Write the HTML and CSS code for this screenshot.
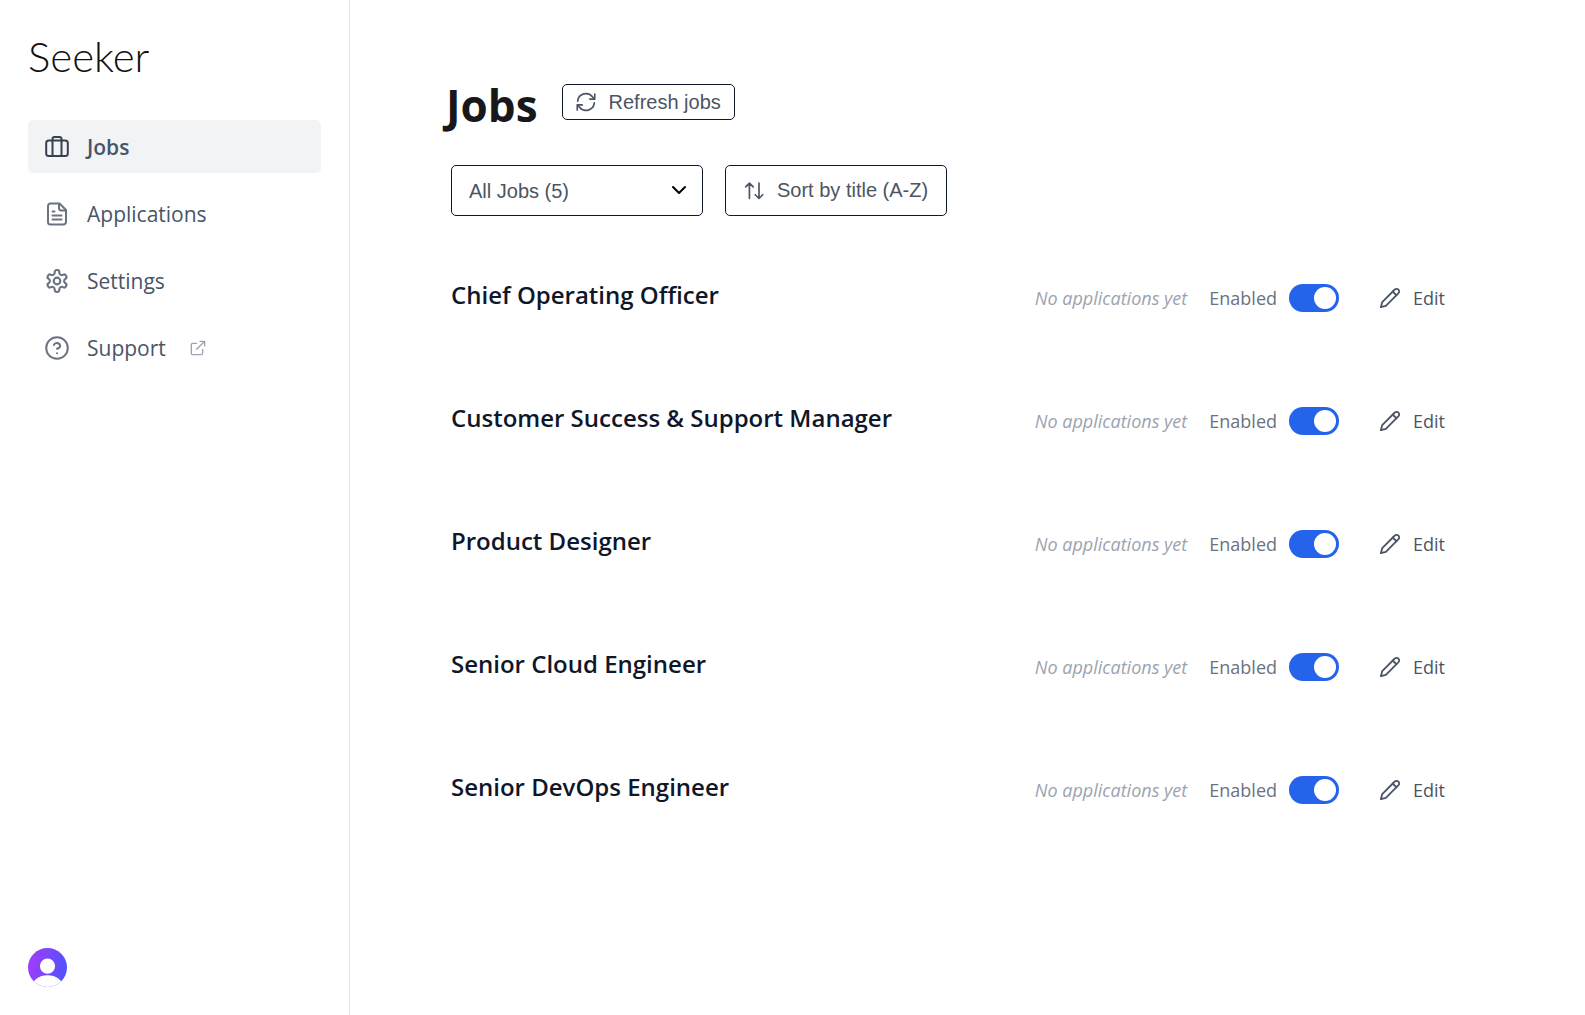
FILE: index.html
```html
<!DOCTYPE html>
<html lang="en">
<head>
  <meta charset="UTF-8" />
  <meta name="viewport" content="width=device-width, initial-scale=1.0"/>
  <title>Seeker - Jobs</title>
  <link rel="stylesheet" href="styles.css">
</head>
<body>

  <!-- shared icons -->
  <svg class="sprite" aria-hidden="true">
    <symbol id="icon-pencil" viewBox="0 0 24 24">
      <path d="M17 3a2.850 2.830 0 1 1 4 4L7.500 20.500 2 22l1.500-5.500Z"/>
      <path d="m15 5 4 4"/>
    </symbol>
  </svg>

  <aside class="sidebar">
    <a class="logo" href="#">Seeker</a>

    <nav class="nav">
      <a class="nav-item active" href="#">
        <svg class="icon" viewBox="0 0 24 24">
          <rect x="1.200" y="5.500" width="21.600" height="15.500" rx="2.500"/>
          <path d="M7.500 21V4a2 2 0 0 1 2-2h5a2 2 0 0 1 2 2v17"/>
        </svg>
        Jobs
      </a>
      <a class="nav-item" href="#">
        <svg class="icon" viewBox="0 0 24 24">
          <path d="M14.500 1.500H5.500a2.500 2.500 0 0 0-2.500 2.500v16a2.500 2.500 0 0 0 2.500 2.500h13a2.500 2.500 0 0 0 2.500-2.500V8z"/>
          <path d="M14 2v4a2.500 2.500 0 0 0 2.500 2.500H21M9.500 9.500H7.500M16.500 13.500h-9M16.500 17.500h-9"/>
        </svg>
        Applications
      </a>
      <a class="nav-item" href="#">
        <svg class="icon" viewBox="0.500 0.500 23 23">
          <path d="M12.220 1.500h-.440a2 2 0 0 0-2 2v.680a2 2 0 0 1-1 1.730l-.430.250a2 2 0 0 1-2 0l-.150-.080a2 2 0 0 0-2.730.730l-.220.380a2 2 0 0 0 .730 2.730l.150.100a2 2 0 0 1 1 1.720v.510a2 2 0 0 1-1 1.740l-.150.090a2 2 0 0 0-.730 2.730l.220.380a2 2 0 0 0 2.730.730l.150-.080a2 2 0 0 1 2 0l.430.250a2 2 0 0 1 1 1.730v.680a2 2 0 0 0 2 2h.440a2 2 0 0 0 2-2v-.680a2 2 0 0 1 1-1.730l.430-.250a2 2 0 0 1 2 0l.150.080a2 2 0 0 0 2.730-.730l.220-.390a2 2 0 0 0-.730-2.730l-.150-.080a2 2 0 0 1-1-1.740v-.500a2 2 0 0 1 1-1.740l.150-.090a2 2 0 0 0 .730-2.730l-.220-.380a2 2 0 0 0-2.730-.730l-.150.080a2 2 0 0 1-2 0l-.430-.250a2 2 0 0 1-1-1.730V3.500a2 2 0 0 0-2-2z"/>
          <circle cx="12" cy="12" r="3.200"/>
        </svg>
        Settings
      </a>
      <a class="nav-item" href="#">
        <svg class="icon" viewBox="0 0 24 24">
          <circle cx="12" cy="12" r="10.800"/>
          <path d="M8.900 9a3.200 3.200 0 0 1 6.200 1c0 2-3.100 2.800-3.100 2.800M12 17.300h.010"/>
        </svg>
        Support
        <svg class="icon-external" viewBox="0 0 24 24">
          <path d="M10 5H4a2 2 0 0 0-2 2v13a2 2 0 0 0 2 2h13a2 2 0 0 0 2-2v-6M15 2h7v7M10 14 22 2"/>
        </svg>
      </a>
    </nav>

    <button class="avatar" aria-label="Account">
      <svg viewBox="0 0 40 40">
        <defs>
          <linearGradient id="avatarFill" x1="0" y1="0.400" x2="1" y2="0.600">
            <stop offset="0" stop-color="#a03df8"/>
            <stop offset="1" stop-color="#4f52ff"/>
          </linearGradient>
          <clipPath id="avatarClip"><circle cx="20" cy="20" r="20"/></clipPath>
        </defs>
        <g clip-path="url(#avatarClip)">
          <rect width="40" height="40" fill="url(#avatarFill)"/>
          <circle cx="20" cy="18.500" r="7.800" fill="#fff"/>
          <ellipse cx="20" cy="40" rx="16" ry="12" fill="#fff"/>
        </g>
      </svg>
    </button>
  </aside>

  <main class="content">
    <header class="page-header">
      <h1>Jobs</h1>
      <button class="btn btn-small">
        <svg class="icon-btn" viewBox="0 0 24 24">
          <path d="M2 11a10 10 0 0 1 18-5l2.500 2.500M22.500 2.500v6h-6M22 13a10 10 0 0 1-18 5l-2.500-2.500M1.500 21.500v-6h6"/>
        </svg>
        Refresh jobs
      </button>
    </header>

    <div class="filters">
      <div class="select-wrap">
        <select id="jobFilter" aria-label="Filter jobs">
          <option>All Jobs (5)</option>
        </select>
        <svg class="chevron" viewBox="0 0 14 14"><path d="m1 4 6 6 6-6"/></svg>
      </div>
      <button class="btn">
        <svg class="icon-btn" viewBox="0 0 24 24">
          <path d="m2 7 4.500-4.500L11 7M6.500 2.500v18.500M13.500 16.500 18 21l4.500-4.500M18 21V2.500"/>
        </svg>
        Sort by title (A-Z)
      </button>
    </div>

    <ul class="job-list">
      <li class="job">
        <h2>Chief Operating Officer</h2>
        <div class="job-actions">
          <em>No applications yet</em>
          <label class="toggle">Enabled <input type="checkbox" checked></label>
          <a class="edit" href="#"><svg class="icon-edit"><use href="#icon-pencil"/></svg>Edit</a>
        </div>
      </li>
      <li class="job">
        <h2>Customer Success &amp; Support Manager</h2>
        <div class="job-actions">
          <em>No applications yet</em>
          <label class="toggle">Enabled <input type="checkbox" checked></label>
          <a class="edit" href="#"><svg class="icon-edit"><use href="#icon-pencil"/></svg>Edit</a>
        </div>
      </li>
      <li class="job">
        <h2>Product Designer</h2>
        <div class="job-actions">
          <em>No applications yet</em>
          <label class="toggle">Enabled <input type="checkbox" checked></label>
          <a class="edit" href="#"><svg class="icon-edit"><use href="#icon-pencil"/></svg>Edit</a>
        </div>
      </li>
      <li class="job">
        <h2>Senior Cloud Engineer</h2>
        <div class="job-actions">
          <em>No applications yet</em>
          <label class="toggle">Enabled <input type="checkbox" checked></label>
          <a class="edit" href="#"><svg class="icon-edit"><use href="#icon-pencil"/></svg>Edit</a>
        </div>
      </li>
      <li class="job">
        <h2>Senior DevOps Engineer</h2>
        <div class="job-actions">
          <em>No applications yet</em>
          <label class="toggle">Enabled <input type="checkbox" checked></label>
          <a class="edit" href="#"><svg class="icon-edit"><use href="#icon-pencil"/></svg>Edit</a>
        </div>
      </li>
    </ul>
  </main>

</body>
</html>
```
FILE: styles.css
```css
* {
  box-sizing: border-box;
}

body {
  display: flex;
  min-height: 100vh;
  margin: 0;
  background: #fff;
  color: #4b5563;
  font-family: 'Open Sans', 'Noto Sans', sans-serif;
}

a {
  color: inherit;
  text-decoration: none;
}

button, select {
  font-family: 'Liberation Sans', Arial, sans-serif;
  color: #4b5563;
  cursor: pointer;
}

svg {
  flex: none;
  fill: none;
  stroke: currentColor;
  stroke-width: 2;
  stroke-linecap: round;
  stroke-linejoin: round;
}

.sprite {
  position: absolute;
  width: 0;
  height: 0;
}

/* Sidebar */
.sidebar {
  display: flex;
  flex-direction: column;
  flex: none;
  width: 350px;
  padding: 32px 28px 28px;
  border-right: 1px solid #e5e7eb;
}

.logo {
  font-family: Lato, sans-serif;
  font-size: 42px;
  font-weight: 300;
  line-height: 48px;
  color: #111;
}

.nav {
  display: flex;
  flex-direction: column;
  gap: 14px;
  margin-top: 40px;
}

.nav-item {
  display: flex;
  align-items: center;
  gap: 18px;
  height: 53px;
  padding: 0 17px;
  border-radius: 5px;
  font-size: 21px;
  color: #475569;
}

.nav-item.active {
  background: #f1f3f5;
  font-weight: 600;
}

.icon {
  width: 24px;
  height: 24px;
  color: #6b7280;
}

.active .icon {
  color: #374151;
}

.icon-external {
  width: 16px;
  height: 16px;
  margin-left: 6px;
  color: #9ca3af;
}

.avatar {
  width: 39px;
  height: 39px;
  margin-top: auto;
  padding: 0;
  border: none;
  background: none;
}

.avatar svg {
  display: block;
  stroke: none;
}

/* Main column */
.content {
  flex: 1;
  padding: 75px 140px 0 101px;
}

.page-header {
  display: flex;
  align-items: flex-start;
  gap: 24px;
  margin-left: -5px;
}

h1 {
  margin: 0;
  font-size: 44px;
  font-weight: 700;
  line-height: 60px;
  color: #18181b;
}

.btn {
  display: flex;
  align-items: center;
  gap: 13px;
  height: 51px;
  padding: 0 18px;
  border: 1px solid #0f172a;
  border-radius: 5px;
  background: #fff;
  font-size: 20px;
}

.btn-small {
  height: 36px;
  margin-top: 9px;
  padding: 0 13px;
}

.icon-btn {
  width: 20px;
  height: 20px;
}

.filters {
  display: flex;
  gap: 22px;
  margin-top: 30px;
}

.select-wrap {
  position: relative;
}

select {
  appearance: none;
  width: 252px;
  height: 51px;
  padding: 0 17px;
  border: 1px solid #0f172a;
  border-radius: 5px;
  background: #fff;
  font-size: 20px;
}

.chevron {
  position: absolute;
  top: 18px;
  right: 17px;
  width: 14px;
  height: 14px;
  color: #000;
  pointer-events: none;
}

/* Job rows */
.job-list {
  display: flex;
  flex-direction: column;
  gap: 81px;
  margin: 61px 0 0;
  padding: 0;
  list-style: none;
}

.job {
  display: flex;
  justify-content: space-between;
}

h2 {
  margin: 0;
  font-size: 24px;
  font-weight: 600;
  line-height: 36px;
  color: #0f172a;
}

.job-actions {
  display: flex;
  align-items: center;
  height: 42px;
  font-size: 18px;
}

.job-actions em {
  margin-right: 22px;
  color: #9ca3af;
}

.toggle {
  display: flex;
  align-items: center;
  gap: 12px;
  color: #6b7280;
}

.toggle input {
  appearance: none;
  display: flex;
  align-items: center;
  width: 50px;
  height: 28px;
  margin: 0;
  padding: 0 3px;
  border-radius: 14px;
  background: #d1d5db;
  cursor: pointer;
}

.toggle input::before {
  content: "";
  width: 22px;
  height: 22px;
  border-radius: 50%;
  background: #fff;
}

.toggle input:checked {
  justify-content: flex-end;
  background: #2563eb;
}

.edit {
  display: flex;
  align-items: center;
  gap: 12px;
  margin-left: 40px;
}

.icon-edit {
  width: 22px;
  height: 22px;
}
```
